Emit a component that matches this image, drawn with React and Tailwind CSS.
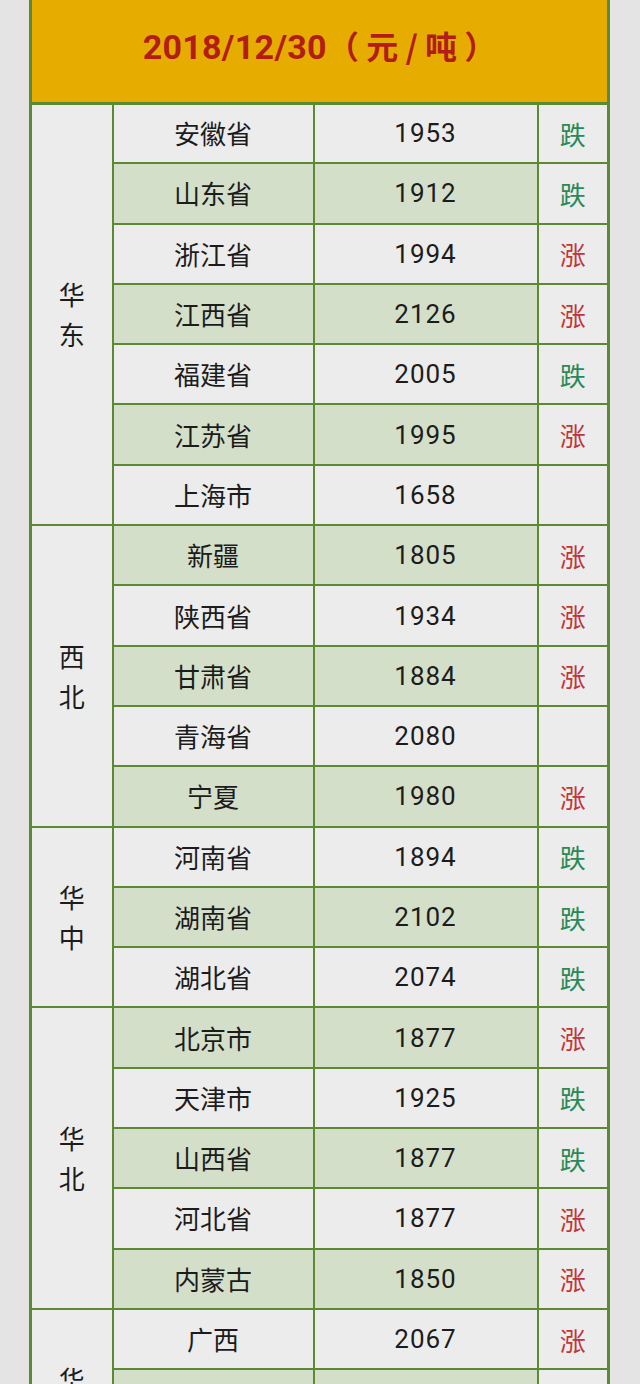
import React from 'react';

const groups = [
  {
    region: '华东',
    rows: [
      ['安徽省', '1953', '跌'],
      ['山东省', '1912', '跌'],
      ['浙江省', '1994', '涨'],
      ['江西省', '2126', '涨'],
      ['福建省', '2005', '跌'],
      ['江苏省', '1995', '涨'],
      ['上海市', '1658', ''],
    ],
  },
  {
    region: '西北',
    rows: [
      ['新疆', '1805', '涨'],
      ['陕西省', '1934', '涨'],
      ['甘肃省', '1884', '涨'],
      ['青海省', '2080', ''],
      ['宁夏', '1980', '涨'],
    ],
  },
  {
    region: '华中',
    rows: [
      ['河南省', '1894', '跌'],
      ['湖南省', '2102', '跌'],
      ['湖北省', '2074', '跌'],
    ],
  },
  {
    region: '华北',
    rows: [
      ['北京市', '1877', '涨'],
      ['天津市', '1925', '跌'],
      ['山西省', '1877', '跌'],
      ['河北省', '1877', '涨'],
      ['内蒙古', '1850', '涨'],
    ],
  },
  {
    region: '华南',
    rows: [
      ['广西', '2067', '涨'],
      ['广东省', '2110', '涨'],
      ['海南省', '2150', ''],
    ],
  },
];

const cjk = { fontFamily: '"Noto Sans CJK SC", "Noto Sans", sans-serif' };
const num = { fontFamily: 'Roboto, "Noto Sans CJK SC", sans-serif' };

function TrendCell({ value }) {
  const color = value === '跌' ? 'text-[#2a8a57]' : 'text-[#c0373a]';
  return (
    <td className={`border-2 border-[#5b8a33] bg-[#ececec] text-center text-[26px] ${color}`} style={cjk}>
      {value}
    </td>
  );
}

export default function App() {
  let idx = 0;
  return (
    <div className="min-h-[1384px] bg-[#e4e4e4] pl-[29px]">
      <table className="w-[581px] table-fixed border-collapse border-[3px] border-[#5b8a33] border-t-0">
        <colgroup>
          <col className="w-[82px]" />
          <col className="w-[201px]" />
          <col className="w-[224px]" />
          <col className="w-[71px]" />
        </colgroup>
        <thead>
          <tr>
            <th
              colSpan={4}
              className="h-[103px] border-b-[3px] border-[#5b8a33] bg-[#e6ac00] pb-[8px] text-center align-middle"
            >
              <span className="text-[34px] font-bold tracking-[0.3px] text-[#b21d18]" style={num}>
                2018/12/30
              </span>
              <span className="text-[32px] font-bold text-[#b21d18]" style={cjk}>
                （ 元 / 吨 ）
              </span>
            </th>
          </tr>
        </thead>
        <tbody>
          {groups.map((g) =>
            g.rows.map((r, i) => {
              const shaded = idx++ % 2 === 1;
              const bg = shaded ? 'bg-[#d4dfca]' : 'bg-[#ececec]';
              return (
                <tr key={g.region + r[0]} className="h-[60.3px]">
                  {i === 0 && (
                    <td
                      rowSpan={g.rows.length}
                      className="border-2 border-[#5b8a33] bg-[#ececec] text-center align-middle text-[26px] leading-[40px] text-[#1c1c1c]"
                      style={cjk}
                    >
                      <div className="flex flex-col items-center">
                        {g.region.split('').map((c) => (
                          <span key={c}>{c}</span>
                        ))}
                      </div>
                    </td>
                  )}
                  <td
                    className={`border-2 border-[#5b8a33] ${bg} text-center text-[26px] leading-none text-[#1c1c1c]`}
                    style={cjk}
                  >
                    {r[0]}
                  </td>
                  <td
                    className={`border-2 border-[#5b8a33] ${bg} text-center text-[26px] leading-none tracking-[1px] text-[#1c1c1c]`}
                    style={num}
                  >
                    {r[1]}
                  </td>
                  <TrendCell value={r[2]} />
                </tr>
              );
            })
          )}
        </tbody>
      </table>
    </div>
  );
}
